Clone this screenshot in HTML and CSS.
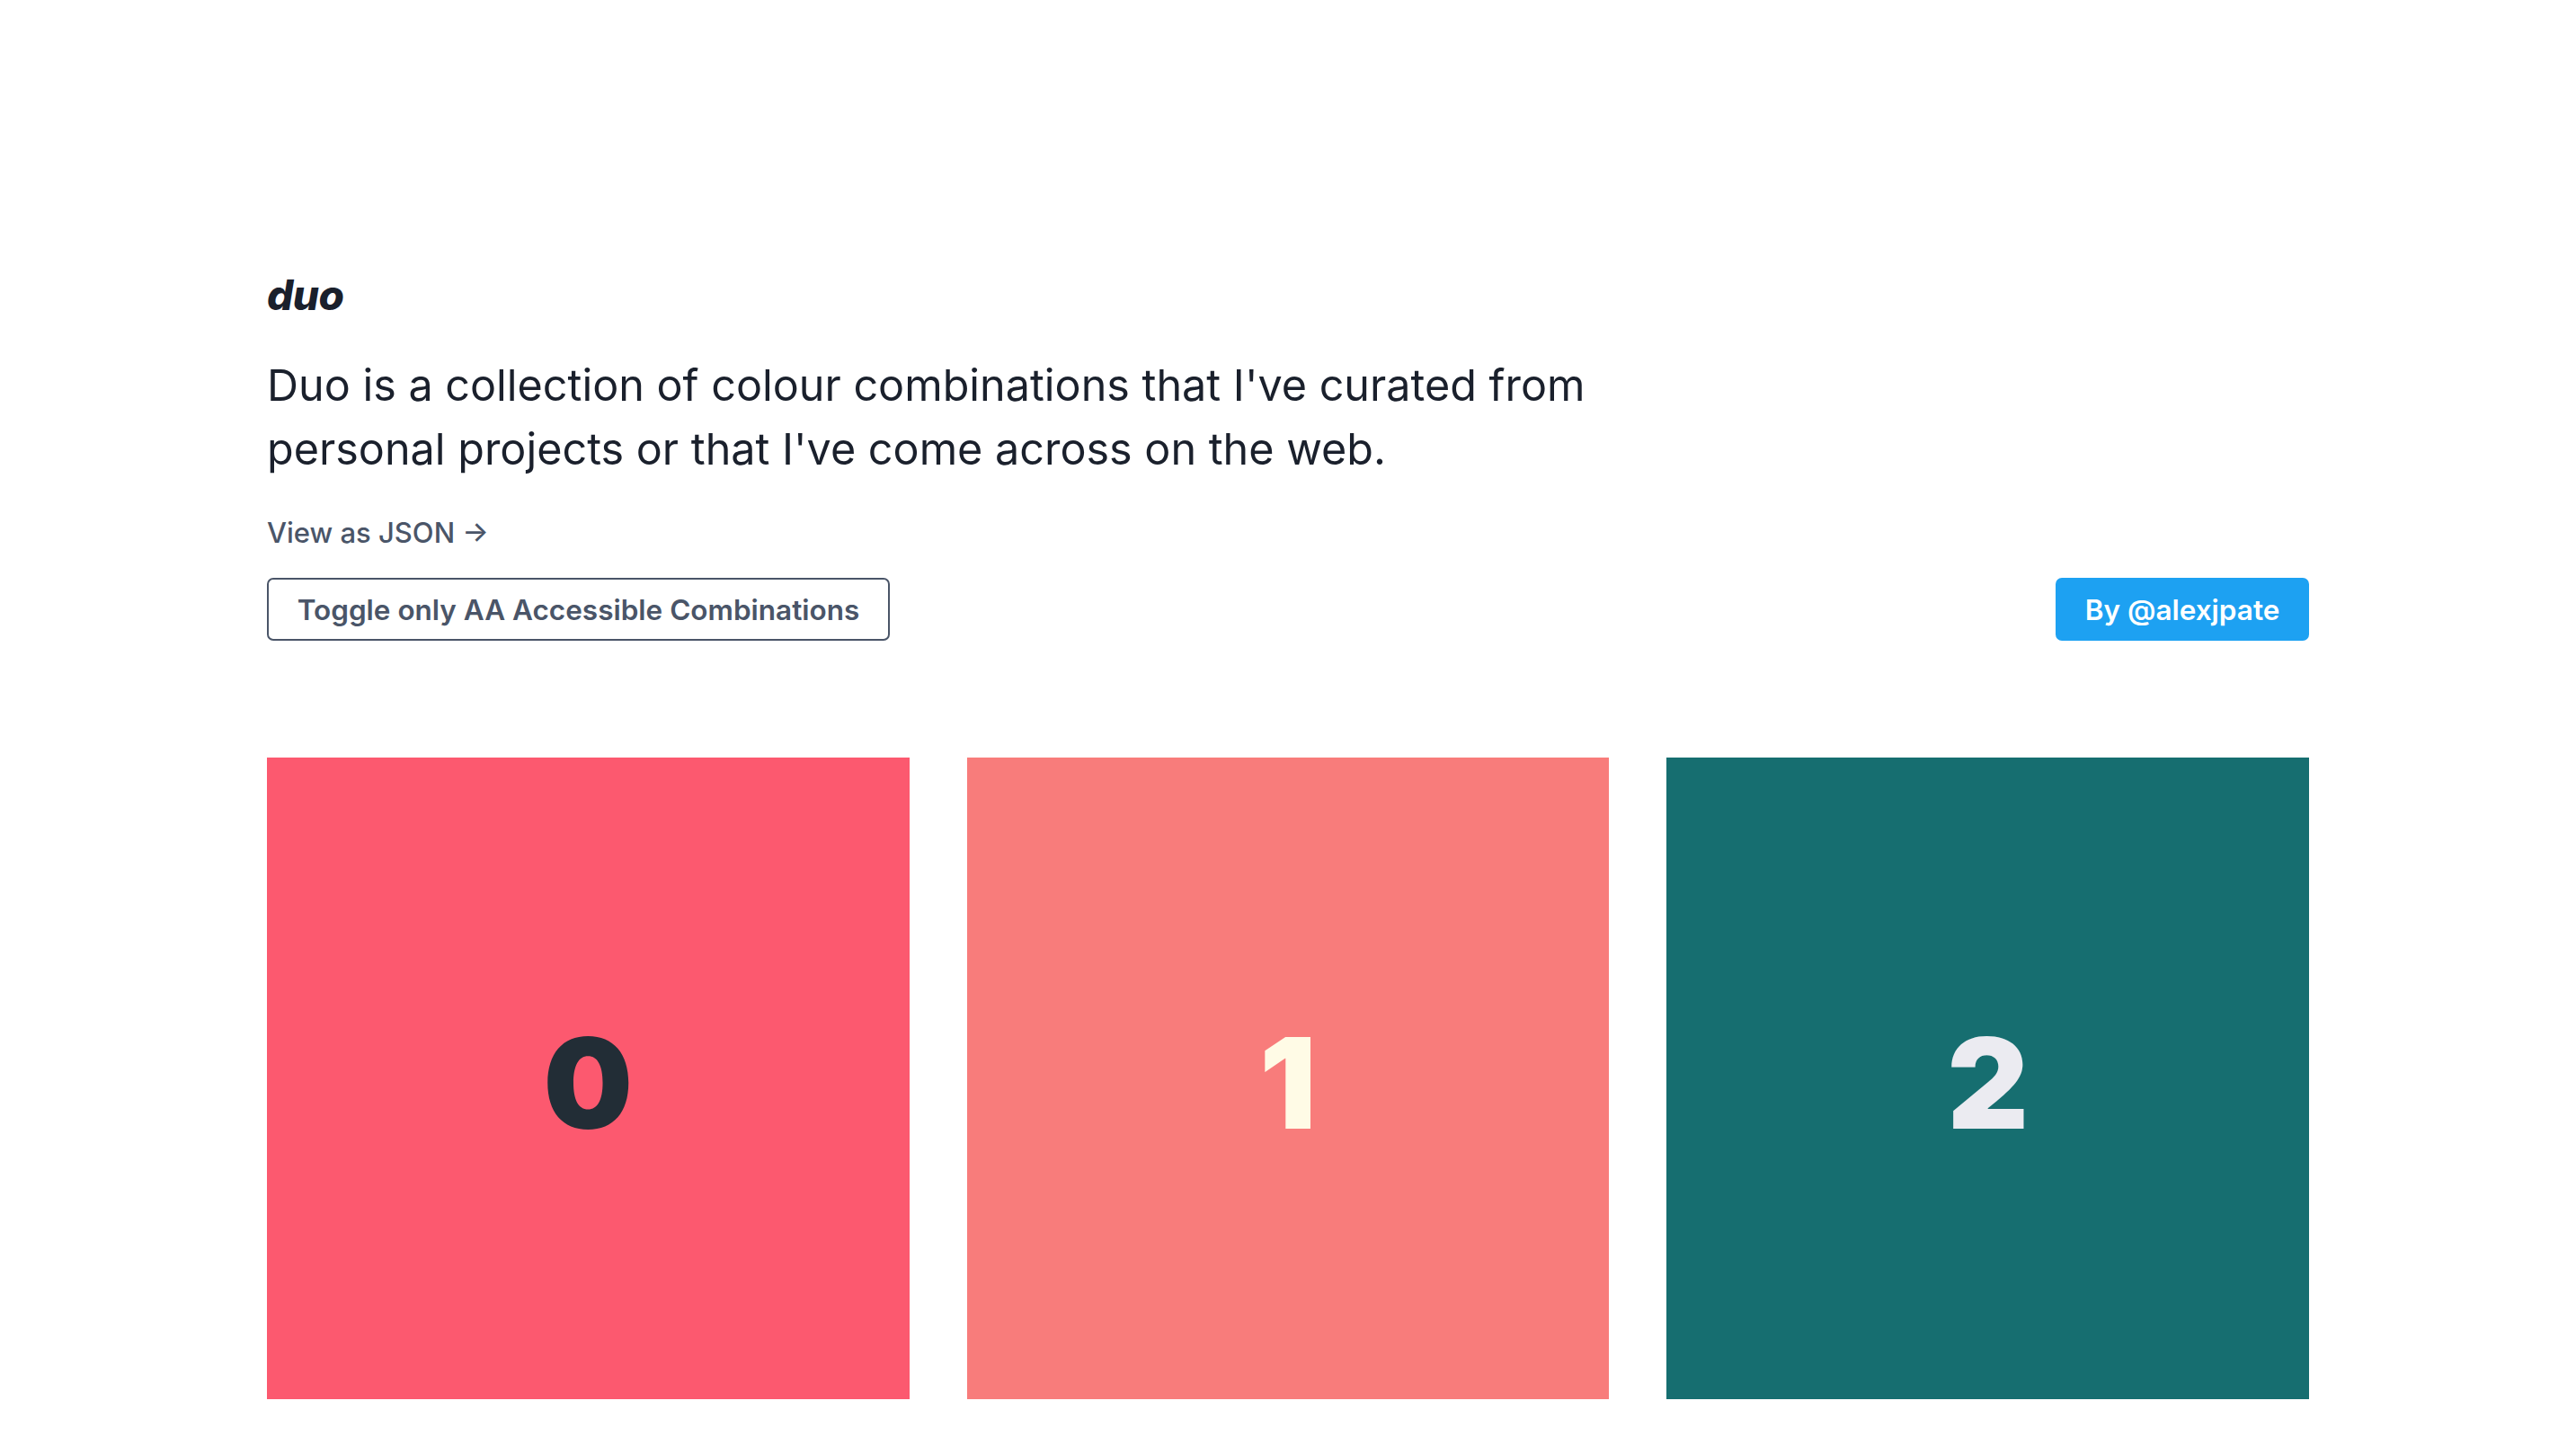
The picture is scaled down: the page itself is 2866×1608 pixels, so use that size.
FILE: index.html
```html
<!DOCTYPE html>
<html lang="en">
<head>
<meta charset="utf-8">
<title>duo</title>
<link rel="stylesheet" href="styles.css">
</head>
<body>
<main class="page">
  <header class="intro">
    <h1 class="logo">duo</h1>
    <p class="lead">Duo is a collection of colour combinations that I've curated from personal projects or that I've come across on the web.</p>
    <a class="json-link" href="#">View as JSON →</a>
    <div class="actions">
      <button class="toggle" type="button">Toggle only AA Accessible Combinations</button>
      <a class="author" href="#">By @alexjpate</a>
    </div>
  </header>
  <section class="grid">
    <div class="swatch swatch-0"><span>0</span></div>
    <div class="swatch swatch-1"><span>1</span></div>
    <div class="swatch swatch-2"><span>2</span></div>
  </section>
</main>
</body>
</html>
```
FILE: styles.css
```css
* { box-sizing: border-box; }
html, body { margin: 0; padding: 0; background: #ffffff; }
body {
  font-family: Inter, "Noto Sans", "Liberation Sans", sans-serif;
  color: #1a202c;
  height: 1608px;
  overflow: hidden;
}
.page {
  width: 2272px;
  margin: 0 auto;
  padding-top: 301px;
}
.intro { display: flex; flex-direction: column; align-items: flex-start; }
.logo {
  margin: 0;
  font-size: 46px;
  line-height: 55px;
  font-weight: 800;
  font-style: italic;
  color: #1a202c;
  letter-spacing: -0.5px;
}
.lead {
  margin: 37px 0 0;
  max-width: 1540px;
  font-size: 48.5px;
  line-height: 71px;
  font-weight: 400;
  color: #1a202c;
}
.json-link {
  margin-top: 35px;
  font-size: 31px;
  line-height: 45px;
  font-weight: 500;
  color: #4a5568;
  text-decoration: none;
}
.actions {
  margin-top: 28px;
  width: 100%;
  display: flex;
  justify-content: space-between;
  align-items: center;
}
.toggle {
  height: 70px;
  width: 693px;
  padding: 0 30px;
  border: 2.5px solid #4a5568;
  border-radius: 7px;
  background: #fff;
  font-family: inherit;
  font-size: 31.5px;
  font-weight: 600;
  color: #4a5568;
  white-space: nowrap;
}
.author {
  height: 70px;
  width: 282px;
  display: flex;
  align-items: center;
  justify-content: center;
  background: #1da1f2;
  border-radius: 7px;
  color: #ffffff;
  font-size: 31.5px;
  font-weight: 600;
  text-decoration: none;
}
.grid {
  margin-top: 130px;
  display: grid;
  grid-template-columns: repeat(3, 1fr);
  gap: 64px;
}
.swatch {
  height: 714px;
  padding-top: 9px;
  display: flex;
  align-items: center;
  justify-content: center;
  font-size: 140px;
  font-weight: 900;
  line-height: 1;
}
.swatch-0 { background: #fc596f; color: #222d36; }
.swatch-1 { background: #f87c7b; color: #fffbe6; }
.swatch-2 { background: #166e70; color: #ebebf1; }
```
